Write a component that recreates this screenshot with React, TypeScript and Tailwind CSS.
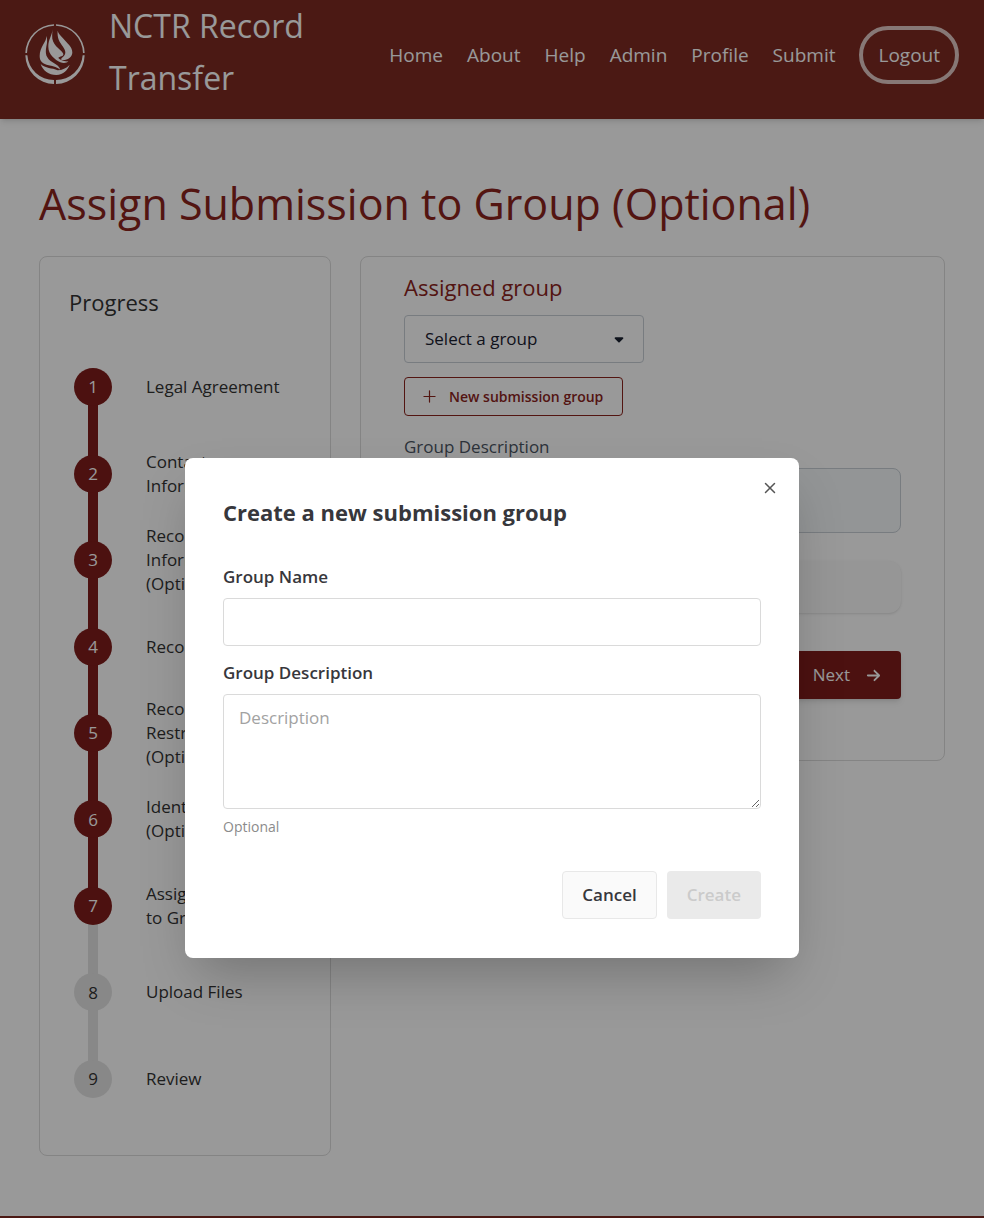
import { Plus, X } from "lucide-react";
import { FaArrowRight, FaCaretDown } from "react-icons/fa6";

const links = ["Home", "About", "Help", "Admin", "Profile", "Submit"];

const steps = [
  "Legal Agreement",
  "Contact Information",
  "Record Source Information (Optional)",
  "Record Details",
  "Record Rights and Restrictions (Optional)",
  "Identifiers (Optional)",
  "Assign Submission to Group",
  "Upload Files",
  "Review",
];
const current = 7;

function Logo() {
  return (
    <svg viewBox="74 72 180 180" className="size-15 shrink-0" fill="currentColor" aria-hidden="true">
      <path d="M75 159A88 88 0 0 1 161 73V77A84 84 0 0 0 80 159Z" />
      <path d="M253 159A88 88 0 0 0 167 73V77A84 84 0 0 1 248 159Z" />
      <path d="M75 166A88 88 0 0 0 161 252V240A80 80 0 0 1 81 166Z" />
      <path d="M253 166A88 88 0 0 1 167 252V240A80 80 0 0 0 247 166Z" />
      <path d="M138 108C140 125 118 140 118 168C118 185 128 192 145 196C160 199 172 203 180 209C174 190 150 190 141 172C133 158 138 142 140 128C141 120 140 112 138 108Z" />
      <path d="M157 88C154 110 144 118 144 140C144 165 164 178 180 187C190 191 200 189 204 184C190 185 179 180 174 174C178 168 190 170 189 162C187 151 160 140 156 116C155 104 156 96 157 88Z" />
      <path d="M172 92C170 115 178 126 188 140C196 152 198 160 190 169C186 174 180 176 184 180C200 182 215 172 216 158C216 140 200 130 188 115C180 106 174 100 172 92Z" />
      <path d="M121 192C135 206 155 203 172 211C185 210 198 205 208 194C202 210 190 224 168 225C145 225 128 212 121 192Z" />
    </svg>
  );
}

function Header() {
  return (
    <header className="flex h-[119px] items-center justify-between bg-[#7d2a22] px-[25px] text-white shadow-md">
      <a href="#" className="flex items-center gap-6 pb-3">
        <Logo />
        <span className="-mt-1 w-60 text-[32px] leading-[52px]">NCTR Record Transfer</span>
      </a>
      <nav className="flex items-center gap-6 pb-[9px] text-[19px]">
        {links.map((l) => (
          <a key={l} href="#">{l}</a>
        ))}
        <button type="button" className="h-[58px] rounded-[30px] border-4 border-[#e1c8c5] px-[15px]">
          Logout
        </button>
      </nav>
    </header>
  );
}

function Progress() {
  return (
    <aside className="w-[292px] shrink-0 rounded-lg border border-[#dcdcdc] px-[29px] pt-[31px] pb-[33px]">
      <h2 className="text-[22px] leading-7 font-medium">Progress</h2>
      <ol className="mt-7 grid h-[778px] auto-rows-fr">
        {steps.map((s, i) => {
          const done = i < current;
          return (
            <li key={s} className="relative flex items-center">
              {i > 0 && (
                <span className={`absolute bottom-1/2 left-[19px] h-full w-[10px] ${done ? "bg-[#7f1d1b]" : "bg-[#e3e3e3]"}`} />
              )}
              <span className={`z-10 ml-[5px] flex size-[38px] shrink-0 items-center justify-center rounded-full ${done ? "bg-[#7f1d1b] text-white" : "bg-[#e3e3e3]"}`}>
                {i + 1}
              </span>
              <span className="z-10 ml-[34px] w-[154px] leading-6">{s}</span>
            </li>
          );
        })}
      </ol>
    </aside>
  );
}

function GroupForm() {
  return (
    <section className="grow rounded-lg border border-[#dcdcdc] px-[43px] pt-[14px] pb-[61px]">
      <h2 className="text-[22px] leading-8 text-[#8b241d]">
        <label htmlFor="group">Assigned group</label>
      </h2>
      <div className="relative mt-3 w-60">
        <select id="group" className="h-12 w-full appearance-none rounded border border-[#c8cfd6] px-5 text-[#1a2030]">
          <option>Select a group</option>
        </select>
        <FaCaretDown className="pointer-events-none absolute top-[17px] right-[18px] size-[14px] text-[#1a2030]" />
      </div>
      <button type="button" className="mt-[14px] flex h-[39px] items-center rounded border border-[#8b241d] pr-[19px] pl-[15px] text-sm font-semibold text-[#8b241d]">
        <Plus className="mr-[10px] size-[19px]" strokeWidth={1.5} />
        New submission group
      </button>
      <label htmlFor="current-description" className="mt-[19px] block leading-6 font-medium text-[#4b5563]">Group Description</label>
      <textarea id="current-description" readOnly className="mt-[9px] block h-[65px] w-full resize-none rounded-lg border border-[#c8cfd6] bg-[#f5f8fa]" />
      <div className="mt-7 h-[52px] rounded-xl bg-[#fafafa] shadow-sm" />
      <div className="mt-[38px] flex justify-end">
        <button type="button" className="flex h-12 items-center gap-4 rounded bg-[#7f1d1b] px-5 text-white shadow-md">
          Next <FaArrowRight className="size-[15px]" />
        </button>
      </div>
    </section>
  );
}

function GroupDialog() {
  return (
    <div className="absolute inset-0 z-20 flex items-start justify-center bg-black/40 pt-[458px]">
      <div role="dialog" aria-modal="true" aria-labelledby="dialog-title" className="relative w-[614px] rounded-lg bg-white px-[38px] pt-[39px] pb-[39px] text-[#37373c] shadow-2xl">
        <button type="button" aria-label="Close" className="absolute top-[21px] right-5 text-[#555]">
          <X className="size-[18px]" strokeWidth={2} />
        </button>
        <h2 id="dialog-title" className="text-[22px] leading-[30px] font-bold">Create a new submission group</h2>
        <label htmlFor="name" className="mt-[38px] block leading-6 font-semibold">Group Name</label>
        <input id="name" className="mt-[9px] block h-12 w-full rounded border border-[#dadada] px-[15px]" />
        <label htmlFor="description" className="mt-[15px] block leading-6 font-semibold">Group Description</label>
        <textarea id="description" placeholder="Description" className="mt-[9px] block h-[115px] w-full rounded border border-[#dadada] px-[15px] py-[11px] leading-6 placeholder:text-[#a2a2a2]" />
        <p className="mt-2 text-sm leading-5 text-[#8b8b8b]">Optional</p>
        <div className="mt-[34px] flex justify-end gap-[10px] font-semibold">
          <button type="button" className="h-12 rounded border border-[#e8e8e8] bg-[#fafafa] px-[19px]">Cancel</button>
          <button type="button" disabled className="h-12 rounded bg-[#eaeaea] px-5 text-[#cbcbcb]">Create</button>
        </div>
      </div>
    </div>
  );
}

export default function App() {
  return (
    <div className="relative min-h-screen bg-white font-['Open_Sans',sans-serif] text-[17px] text-[#333]">
      <Header />
      <main className="px-[39px]">
        <h1 className="pt-[55px] text-[43px] leading-[60px] text-[#8b241d]">Assign Submission to Group (Optional)</h1>
        <div className="mt-[22px] flex items-start gap-[29px]">
          <Progress />
          <GroupForm />
        </div>
      </main>
      <footer className="mt-15 h-[2px] bg-[#7d2a22]" />
      <GroupDialog />
    </div>
  );
}
